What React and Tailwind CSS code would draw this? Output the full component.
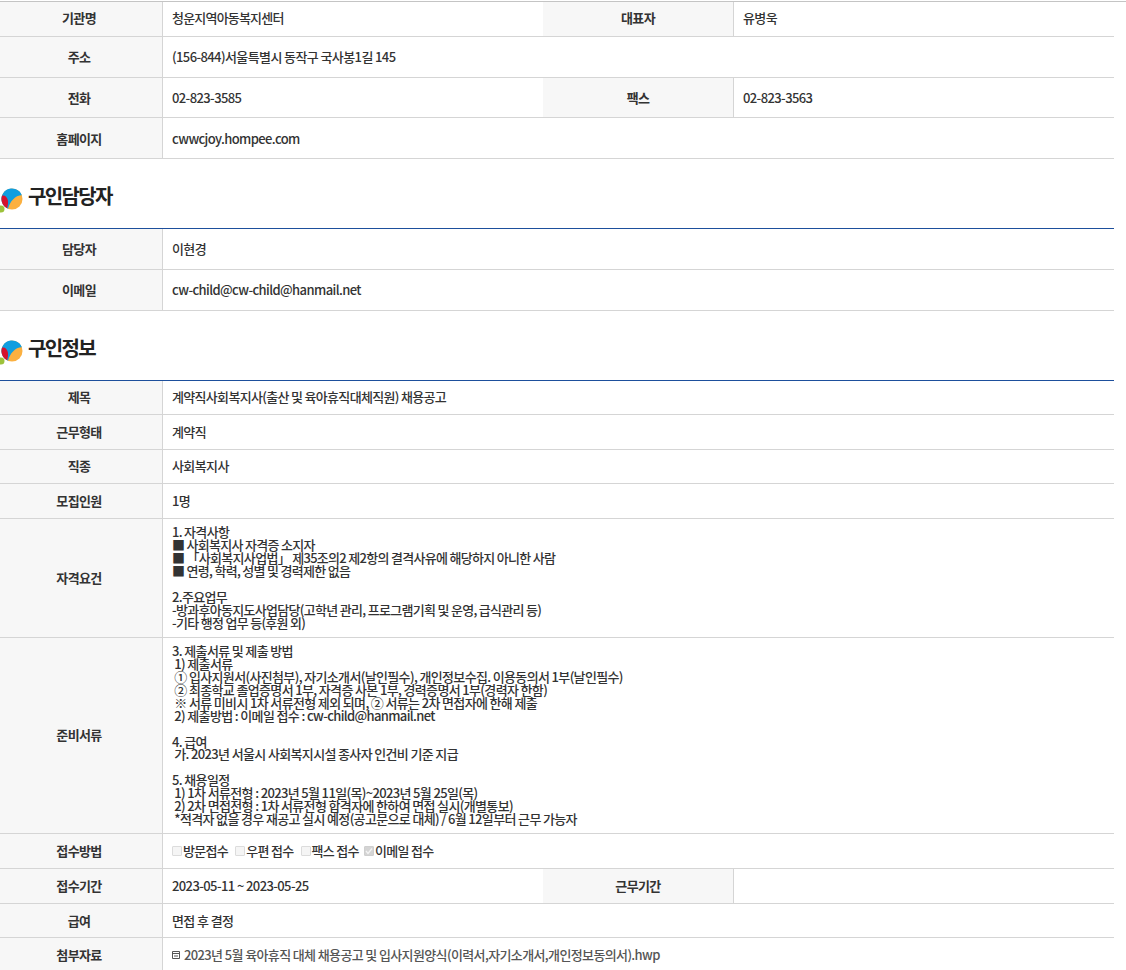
function Th({ children, className = "" }) {
    return (
        <div className={`flex items-center justify-center bg-[#f7f7f7] font-bold text-[#333] ${className}`}>
            {children}
        </div>
    )
}

function Row({ label, h, children, label2, value2, last, shift = "" }) {
    return (
        <div className={`flex ${h} ${last ? "" : "border-b border-[#d5d5d5]"}`}>
            <Th className={`w-[163px] shrink-0 border-r border-[#d5d5d5] pr-[4px] ${shift}`}>{label}</Th>
            {label2 ? (
                <>
                    <div className={`w-[380px] shrink-0 flex items-center pl-[9px] ${shift}`}>{children}</div>
                    <Th className={`w-[191px] shrink-0 border-r border-[#d5d5d5] ${shift}`}>{label2}</Th>
                    <div className={`flex-1 flex items-center pl-[9px] ${shift}`}>{value2}</div>
                </>
            ) : (
                <div className={`flex-1 flex items-center pl-[9px] ${shift}`}>{children}</div>
            )}
        </div>
    )
}

function Heading({ children }) {
    return (
        <div className="flex items-center h-[70px] pt-[4px] border-b border-[#1d4f9c]">
            <svg width="23" height="26" viewBox="0 0 23 26" className="mt-[10px] shrink-0">
                <circle cx="1" cy="21" r="3.5" fill="#9dc23b" />
                <circle cx="12" cy="11" r="10.5" fill="#fbb040" />
                <path d="M4.600 18.400A10.500 10.500 0 1 1 21.800 7.300C15 7.500 10.500 13 8 20.700Z" fill="#0f9ee0" />
                <path d="M2 7.800C4.500 6.800 7 9 7.800 12 8.400 14.500 8 17 7 20.200 3.500 18.500 1.500 15 1.500 11.500 1.500 10 1.600 9 2 7.800Z" fill="#d6112d" />
            </svg>
            <h2 className="ml-[5px] text-[20px] leading-none font-bold tracking-[-1.65px] text-[#222]">{children}</h2>
        </div>
    )
}

function Check({ checked }) {
    return (
        <span className={`inline-flex items-center justify-center w-[10px] h-[10px] mr-[1px] rounded-[1px] border ${checked ? "bg-[#d4d4d4] border-[#cfcfcf]" : "bg-[#f5f5f5] border-[#dcdcdc]"}`}>
            {checked && (
                <svg width="8" height="8" viewBox="0 0 8 8">
                    <path d="M1 4l2 2.500L7 1.500" fill="none" stroke="#f4f4f4" strokeWidth="1.300" />
                </svg>
            )}
        </span>
    )
}

const qualification = [
    "1. 자격사항",
    "■ 사회복지사 자격증 소지자",
    "■ 「사회복지사업법」 제35조의2 제2항의 결격사유에 해당하지 아니한 사람",
    "■ 연령, 학력, 성별 및 경력제한 없음",
    "",
    "2.주요업무",
    "-방과후아동지도사업담당(고학년 관리, 프로그램기획 및 운영, 급식관리 등)",
    "-기타 행정 업무 등(후원 외)",
]

const documents = [
    "3. 제출서류 및 제출 방법",
    " 1) 제출서류",
    " ① 입사지원서(사진첨부), 자기소개서(날인필수), 개인정보수집. 이용동의서 1부(날인필수)",
    " ② 최종학교 졸업증명서 1부, 자격증 사본 1부, 경력증명서 1부(경력자 한함)",
    " ※ 서류 미비시 1차 서류전형 제외 되며, ② 서류는 2차 면접자에 한해 제출",
    " 2) 제출방법 : 이메일 접수 : cw-child@hanmail.net",
    "",
    "4. 급여",
    " 가. 2023년 서울시 사회복지시설 종사자 인건비 기준 지급",
    "",
    "5. 채용일정",
    " 1) 1차 서류전형 : 2023년 5월 11일(목)~2023년 5월 25일(목)",
    " 2) 2차 면접전형 : 1차 서류전형 합격자에 한하여 면접 실시(개별통보)",
    " *적격자 없을 경우 재공고 실시 예정(공고문으로 대체) / 6월 12일부터 근무 가능자",
]

function Lines({ lines, className = "" }) {
    return (
        <div className={`whitespace-pre ${className}`}>
            {lines.map((line, i) => (
                <div key={i} className="h-[12.9px] leading-[12.9px]">{line}</div>
            ))}
        </div>
    )
}

export default function App() {
    return (
        <div className="w-[1126px] h-[970px] overflow-hidden bg-white text-[13px] font-medium text-[#333] tracking-[-0.6px] font-['Noto_Sans_CJK_KR','Noto_Sans',sans-serif] pt-[1px]">
            <div className="border-t border-[#c4c4c4]">
                <div className="w-[1114px]">
                    <Row label="기관명" h="h-[35px]" label2="대표자" value2="유병욱" shift="pb-[3px]">
                        <span className="tracking-[-0.8px]">청운지역아동복지센터</span>
                    </Row>
                    <Row label="주소" h="h-[41px]">(156-844)서울특별시 동작구 국사봉1길 145</Row>
                    <Row label="전화" h="h-[40px]" label2="팩스" value2="02-823-3563">02-823-3585</Row>
                    <Row label="홈페이지" h="h-[41px]" shift="pt-[1px]">cwwcjoy.hompee.com</Row>

                    <Heading>구인담당자</Heading>
                    <Row label="담당자" h="h-[41px]">이현경</Row>
                    <Row label="이메일" h="h-[41px]">cw-child@cw-child@hanmail.net</Row>

                    <Heading>구인정보</Heading>
                    <Row label="제목" h="h-[34px]" shift="pb-[1px]">
                        <span className="tracking-[-0.68px]">계약직사회복지사(출산 및 육아휴직대체직원) 채용공고</span>
                    </Row>
                    <Row label="근무형태" h="h-[35px]">계약직</Row>
                    <Row label="직종" h="h-[34px]" shift="pb-[1px]">사회복지사</Row>
                    <Row label="모집인원" h="h-[35px]">1명</Row>
                    <Row label="자격요건" h="h-[119px]"><Lines lines={qualification} className="tracking-[-0.7px]" /></Row>
                    <Row label="준비서류" h="h-[196px]" shift="pb-[2px]"><Lines lines={documents} className="pt-[2px] tracking-[-0.65px]" /></Row>
                    <Row label="접수방법" h="h-[35px]">
                        <span className="flex items-center tracking-[-0.68px]">
                            <Check /><span className="mr-[7px]">방문접수</span>
                            <Check /><span className="mr-[7px]">우편 접수</span>
                            <Check /><span className="mr-[5px]">팩스 접수</span>
                            <Check checked /><span>이메일 접수</span>
                        </span>
                    </Row>
                    <Row label="접수기간" h="h-[35px]" label2="근무기간" shift="pb-[1px]">2023-05-11 ~ 2023-05-25</Row>
                    <Row label="급여" h="h-[34px]">면접 후 결정</Row>
                    <Row label="첨부자료" h="h-[35px]" last shift="pb-[1px]">
                        <span className="flex items-center text-[#555] tracking-[-0.63px]">
                            <svg width="8" height="8" viewBox="0 0 8 8" className="mr-[4px]">
                                <path d="M.5.5h7v7h-7zM.5 2.500h7M2 5h4" fill="none" stroke="#555" strokeWidth="1" />
                            </svg>
                            2023년 5월 육아휴직 대체 채용공고 및 입사지원양식(이력서,자기소개서,개인정보동의서).hwp
                        </span>
                    </Row>
                </div>
            </div>
        </div>
    )
}
